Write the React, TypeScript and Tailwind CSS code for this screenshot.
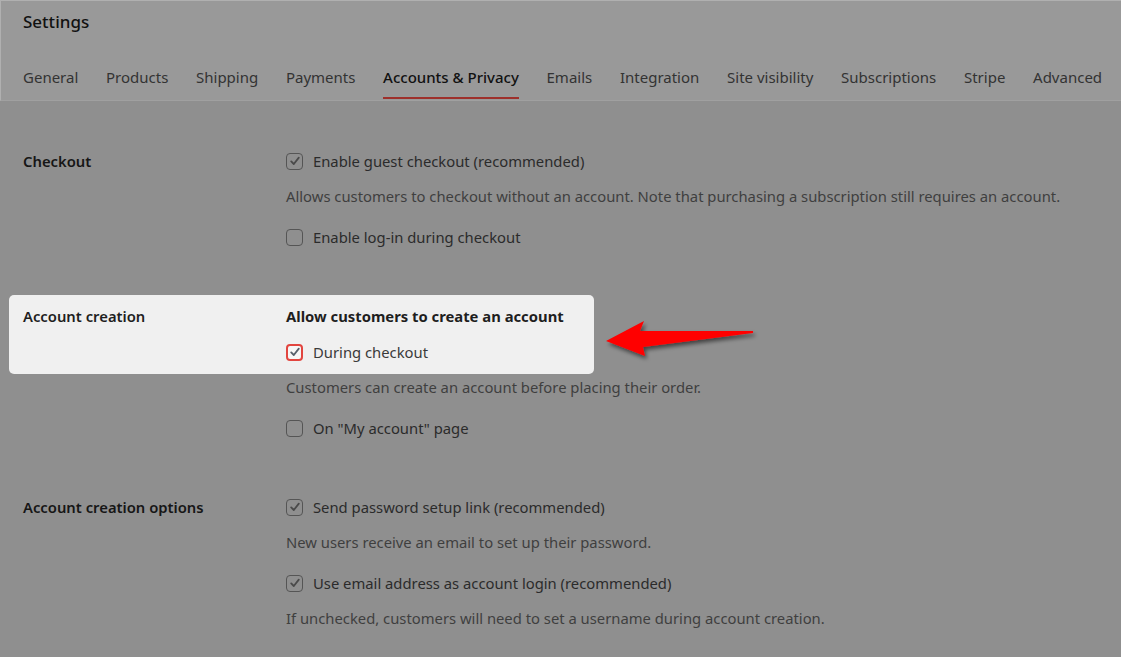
import React from 'react'

const tabs = [
    'General',
    'Products',
    'Shipping',
    'Payments',
    'Accounts & Privacy',
    'Emails',
    'Integration',
    'Site visibility',
    'Subscriptions',
    'Stripe',
    'Advanced',
]

function Checkbox({ checked, focus = false }: { checked: boolean; focus?: boolean }) {
    const box = focus
        ? 'border-2 border-[#e2453f] bg-[#f6f6f6]'
        : 'border border-[#555555] bg-transparent'
    return (
        <span className={`inline-flex items-center justify-center w-[17px] h-[17px] rounded-[4px] shrink-0 ${box}`}>
            {checked && (
                <svg width="12" height="12" viewBox="0 0 12 12" fill="none">
                    <path
                        d="M2.2 6.4 L4.8 9 L9.8 2.6"
                        stroke={focus ? '#56606b' : '#4a4a4a'}
                        strokeWidth="1.8"
                        strokeLinecap="round"
                        strokeLinejoin="round"
                    />
                </svg>
            )}
        </span>
    )
}

function CheckRow({ label, checked, focus = false, className = '' }: { label: string; checked: boolean; focus?: boolean; className?: string }) {
    return (
        <div className={`flex items-center gap-[10px] h-[20px] ${className}`}>
            <Checkbox checked={checked} focus={focus} />
            <span className={focus ? 'text-[#3a3a3a]' : 'text-[#2b2b2b]'}>{label}</span>
        </div>
    )
}

function Desc({ children, className = '' }: { children: React.ReactNode; className?: string }) {
    return <p className={`h-[20px] whitespace-nowrap text-[#3f3f3f] ${className}`}>{children}</p>
}

function Arrow() {
    return (
        <svg className="absolute left-[598px] top-[314px]" width="170" height="56" viewBox="598 314 170 56">
            <defs>
                <filter id="sh" x="-20%" y="-50%" width="140%" height="200%">
                    <feGaussianBlur in="SourceAlpha" stdDeviation="2.2" />
                    <feOffset dx="2" dy="3" result="b" />
                    <feComponentTransfer>
                        <feFuncA type="linear" slope="0.55" />
                    </feComponentTransfer>
                    <feMerge>
                        <feMergeNode />
                        <feMergeNode in="SourceGraphic" />
                    </feMerge>
                </filter>
            </defs>
            <polygon
                points="606,341 644,321 640,331 753,331 753,333 643,347 645,356"
                fill="#ff0000"
                filter="url(#sh)"
            />
        </svg>
    )
}

export default function App() {
    return (
        <div
            className="relative w-[1121px] h-[657px] overflow-hidden bg-[#8f8f8f] text-[14.8px] leading-[20px]"
            style={{ fontFamily: '"Noto Sans", "Open Sans", sans-serif' }}
        >
            {/* ヘッダー */}
            <div className="h-[101px] bg-[#999999] border-t border-l border-[#b0b0b0] border-b border-b-[#a0a0a0] px-[22px]">
                <h1 className="pt-[11px] text-[17px] leading-[20px] font-medium text-[#111111]">Settings</h1>
                <nav className="mt-[35px] flex gap-[27.7px]">
                    {tabs.map(t => (
                        <span
                            key={t}
                            className={`shrink-0 whitespace-nowrap pb-[10px] border-b-2 text-[15px] leading-[20px] ${
                                t === 'Accounts & Privacy'
                                    ? 'border-[#9e302b] text-[#111111] font-medium'
                                    : 'border-transparent text-[#333333]'
                            }`}
                        >
                            {t}
                        </span>
                    ))}
                </nav>
            </div>

            <div className="pt-[50px]">
                {/* Checkout */}
                <div className="flex px-[23px]">
                    <div className="w-[263px] font-semibold text-[#161616]">Checkout</div>
                    <div>
                        <CheckRow label="Enable guest checkout (recommended)" checked />
                        <Desc className="mt-[15px]">
                            Allows customers to checkout without an account. Note that purchasing a subscription still requires an account.
                        </Desc>
                        <CheckRow className="mt-[21px]" label="Enable log-in during checkout" checked={false} />
                    </div>
                </div>

                {/* Account creation (ハイライト) */}
                <div className="mt-[48px] ml-[9px] w-[585px] rounded-[5px] bg-[#f0f0f0] px-[14px] pt-[11px] pb-[12px] flex">
                    <div className="w-[263px] font-semibold text-[#1e1e1e]">Account creation</div>
                    <div>
                        <div className="h-[20px] font-bold text-[#1e1e1e]">Allow customers to create an account</div>
                        <CheckRow className="mt-[16px]" label="During checkout" checked focus />
                    </div>
                </div>
                <div className="pl-[286px]">
                    <Desc className="mt-[3px]">Customers can create an account before placing their order.</Desc>
                    <CheckRow className="mt-[21px]" label='On "My account" page' checked={false} />
                </div>

                {/* Account creation options */}
                <div className="mt-[59px] flex px-[23px]">
                    <div className="w-[263px] font-semibold text-[#161616]">Account creation options</div>
                    <div>
                        <CheckRow label="Send password setup link (recommended)" checked />
                        <Desc className="mt-[15px]">New users receive an email to set up their password.</Desc>
                        <CheckRow className="mt-[21px]" label="Use email address as account login (recommended)" checked />
                        <Desc className="mt-[15px]">If unchecked, customers will need to set a username during account creation.</Desc>
                    </div>
                </div>
            </div>

            <Arrow />
        </div>
    )
}
